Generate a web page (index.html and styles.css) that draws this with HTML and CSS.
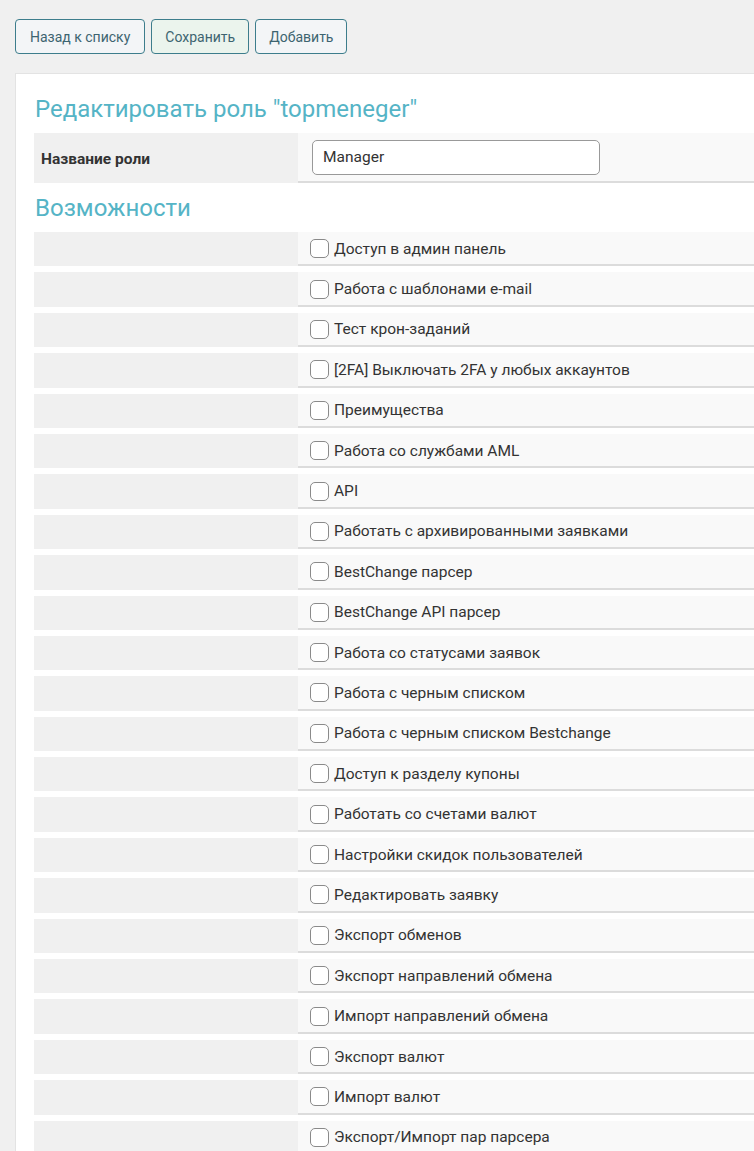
FILE: index.html
```html
<!DOCTYPE html>
<html lang="ru">
<head>
<meta charset="utf-8">
<title>Редактировать роль</title>
<link rel="stylesheet" href="styles.css">
</head>
<body>
<div class="toolbar">
  <button class="btn btn-back">Назад к списку</button>
  <button class="btn btn-save">Сохранить</button>
  <button class="btn">Добавить</button>
</div>
<div class="panel">
  <h1 class="title">Редактировать роль "topmeneger"</h1>
  <div class="name-row">
    <div class="label">Название роли</div>
    <div class="value"><input class="text-input" type="text" value="Manager"></div>
  </div>
  <h2 class="subtitle">Возможности</h2>
  <div class="caps">
    <div class="cap"><div class="cap-left"></div><label class="cap-right"><input type="checkbox" class="cb"><span>Доступ в админ панель</span></label></div>
    <div class="cap"><div class="cap-left"></div><label class="cap-right"><input type="checkbox" class="cb"><span>Работа с шаблонами e-mail</span></label></div>
    <div class="cap"><div class="cap-left"></div><label class="cap-right"><input type="checkbox" class="cb"><span>Тест крон-заданий</span></label></div>
    <div class="cap"><div class="cap-left"></div><label class="cap-right"><input type="checkbox" class="cb"><span>[2FA] Выключать 2FA у любых аккаунтов</span></label></div>
    <div class="cap"><div class="cap-left"></div><label class="cap-right"><input type="checkbox" class="cb"><span>Преимущества</span></label></div>
    <div class="cap"><div class="cap-left"></div><label class="cap-right"><input type="checkbox" class="cb"><span>Работа со службами AML</span></label></div>
    <div class="cap"><div class="cap-left"></div><label class="cap-right"><input type="checkbox" class="cb"><span>API</span></label></div>
    <div class="cap"><div class="cap-left"></div><label class="cap-right"><input type="checkbox" class="cb"><span>Работать с архивированными заявками</span></label></div>
    <div class="cap"><div class="cap-left"></div><label class="cap-right"><input type="checkbox" class="cb"><span>BestChange парсер</span></label></div>
    <div class="cap"><div class="cap-left"></div><label class="cap-right"><input type="checkbox" class="cb"><span>BestChange API парсер</span></label></div>
    <div class="cap"><div class="cap-left"></div><label class="cap-right"><input type="checkbox" class="cb"><span>Работа со статусами заявок</span></label></div>
    <div class="cap"><div class="cap-left"></div><label class="cap-right"><input type="checkbox" class="cb"><span>Работа с черным списком</span></label></div>
    <div class="cap"><div class="cap-left"></div><label class="cap-right"><input type="checkbox" class="cb"><span>Работа с черным списком Bestchange</span></label></div>
    <div class="cap"><div class="cap-left"></div><label class="cap-right"><input type="checkbox" class="cb"><span>Доступ к разделу купоны</span></label></div>
    <div class="cap"><div class="cap-left"></div><label class="cap-right"><input type="checkbox" class="cb"><span>Работать со счетами валют</span></label></div>
    <div class="cap"><div class="cap-left"></div><label class="cap-right"><input type="checkbox" class="cb"><span>Настройки скидок пользователей</span></label></div>
    <div class="cap"><div class="cap-left"></div><label class="cap-right"><input type="checkbox" class="cb"><span>Редактировать заявку</span></label></div>
    <div class="cap"><div class="cap-left"></div><label class="cap-right"><input type="checkbox" class="cb"><span>Экспорт обменов</span></label></div>
    <div class="cap"><div class="cap-left"></div><label class="cap-right"><input type="checkbox" class="cb"><span>Экспорт направлений обмена</span></label></div>
    <div class="cap"><div class="cap-left"></div><label class="cap-right"><input type="checkbox" class="cb"><span>Импорт направлений обмена</span></label></div>
    <div class="cap"><div class="cap-left"></div><label class="cap-right"><input type="checkbox" class="cb"><span>Экспорт валют</span></label></div>
    <div class="cap"><div class="cap-left"></div><label class="cap-right"><input type="checkbox" class="cb"><span>Импорт валют</span></label></div>
    <div class="cap"><div class="cap-left"></div><label class="cap-right"><input type="checkbox" class="cb"><span>Экспорт/Импорт пар парсера</span></label></div>
  </div>
</div>
</body>
</html>
```

FILE: styles.css
```css
html, body {
  margin: 0;
  padding: 0;
  background: #f0f0f0;
  font-family: Roboto, "Liberation Sans", sans-serif;
  color: #333;
  overflow: hidden;
}
body {
  padding: 19px 0 0 15px;
}
.toolbar {
  display: flex;
  gap: 6px;
  height: 35px;
}
.btn {
  font-family: Roboto, "Liberation Sans", sans-serif;
  font-size: 14px;
  color: #3d6470;
  background: #f3f5f7;
  border: 1px solid #3d7d8c;
  border-radius: 4px;
  padding: 0 13px;
  height: 35px;
  cursor: pointer;
}
.btn-back {
  padding: 0 14px;
}
.btn-save {
  background: #ebf4ed;
}
.panel {
  margin-top: 19px;
  background: #fff;
  border-left: 1px solid #e3e3e3;
  border-top: 1px solid #e3e3e3;
  padding: 0 0 0 18px;
  width: 760px;
  min-height: 1100px;
}
.title {
  margin: 0;
  padding: 20px 0 0 1px;
  height: 39px;
  font-size: 24px;
  font-weight: 400;
  color: #55b4c6;
  line-height: 30px;
}
.name-row {
  display: grid;
  grid-template-columns: 264px 1fr;
  height: 50px;
}
.label {
  background: #f0f0f0;
  font-size: 15.5px;
  font-weight: 700;
  display: flex;
  align-items: center;
  padding-left: 7px;
  padding-top: 2px;
}
.value {
  background: #f9f9f9;
  border-bottom: 2px solid #dcdcdc;
  display: flex;
  align-items: center;
  padding-left: 14px;
}
.text-input {
  box-sizing: border-box;
  width: 288px;
  height: 35px;
  border: 1px solid #999;
  border-radius: 5px;
  padding: 0 10px;
  font-family: Roboto, "Liberation Sans", sans-serif;
  font-size: 15.5px;
  color: #333;
  background: #fff;
}
.subtitle {
  margin: 0;
  padding: 11px 0 0 1px;
  height: 38px;
  font-size: 24px;
  font-weight: 400;
  color: #55b4c6;
  line-height: 28px;
}
.caps {
  display: flex;
  flex-direction: column;
  gap: 6px;
}
.cap {
  display: grid;
  grid-template-columns: 264px 1fr;
  height: 34.4px;
}
.cap-left {
  background: #f0f0f0;
}
.cap-right {
  background: #f9f9f9;
  border-bottom: 2px solid #dcdcdc;
  display: flex;
  align-items: center;
  padding-left: 12px;
  padding-top: 1px;
  font-size: 15.5px;
  color: #333;
}
.cb {
  appearance: none;
  -webkit-appearance: none;
  box-sizing: border-box;
  width: 19px;
  height: 19px;
  margin: 0 5px 0 0;
  border: 1px solid #8a8a8a;
  border-radius: 5px;
  background: #fff;
  flex: none;
}
```
